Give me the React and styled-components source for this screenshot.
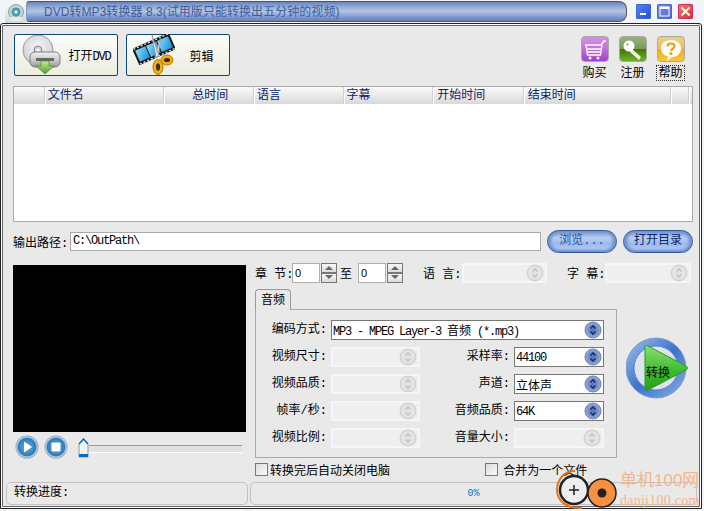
import React from 'react';
import styled, { createGlobalStyle } from 'styled-components';

const GlobalStyle = createGlobalStyle`
  html, body { margin: 0; padding: 0; background: #fff; }
  body { font-family: "Liberation Sans", "Noto Sans CJK SC", sans-serif; font-size: 12px; color: #000; }
`;

const MONO = '"Liberation Mono", "Noto Sans CJK SC", monospace';

const Window = styled.div`
  position: relative;
  width: 704px;
  height: 511px;
  overflow: hidden;
  background: #f4f5f8;
`;

const TitleRow = styled.div`
  display: flex;
  align-items: stretch;
  height: 23px;
  padding-left: 5px;
`;

const AppTab = styled.div`
  width: 21px;
  height: 20px;
  margin-top: 3px;
  background: linear-gradient(#f8f8f8, #d4d8dc);
  border-radius: 5px 3px 0 0;
  display: flex;
  align-items: center;
  justify-content: center;
`;

const TitlePill = styled.div`
  width: 601px;
  height: 21px;
  margin-top: 1px;
  padding-left: 17px;
  box-sizing: border-box;
  border: 1px solid #555;
  border-left-color: #8a9cc4;
  border-radius: 3px 8px 8px 3px;
  background: linear-gradient(#6884bc 0%, #8ea6d2 22%, #b4c5e6 48%, #7f98ca 80%, #6480b6 100%);
  color: #3c5c9e;
  font-size: 12px;
  letter-spacing: 0.05px;
  line-height: 21px;
  white-space: nowrap;
`;

const WindowButtons = styled.div`
  display: flex;
  gap: 6px;
  margin-left: 9px;
  padding-top: 4px;
`;

const WinBtn = styled.div`
  width: 15px;
  height: 15px;
  border-radius: 2px;
  background: ${p => p.$bg};
  box-shadow: inset 0 0 0 1px ${p => p.$edge};
  display: flex;
  align-items: center;
  justify-content: center;
`;

const Frame = styled.div`
  width: 702px;
  height: 486px;
  box-sizing: border-box;
  background: #e9e9e9;
  border: 1px solid #222;
  box-shadow: inset 0 0 0 2px #fff;
  outline: 1px solid #666;
  outline-offset: -3px;
  padding: 10px 4px 3px 5px;
  border-radius: 3px 3px 0 0;
`;

const Content = styled.div`
  padding-left: 7px;
  padding-right: 4px;
`;

const Toolbar = styled.div`
  display: flex;
  height: 46px;
  gap: 8px;
`;

const BigButton = styled.div`
  width: 104px;
  height: 42px;
  box-sizing: border-box;
  margin-left: 1px;
  margin-right: -1px;
  padding-left: 6px;
  display: flex;
  align-items: center;
  border: 1px solid #0c4a78;
  border-radius: 2px;
  background: linear-gradient(#fdfdfb, #ecece0);
`;

const BigLabel = styled.span`
  flex: 1;
  text-align: center;
  padding-right: 1px;
  white-space: nowrap;
  font-size: 12px;
`;

const Narrow = styled.span`
  font-family: "Liberation Mono", monospace;
  font-size: 12px;
  letter-spacing: -1.2px;
`;

const ShopGroup = styled.div`
  margin-left: auto;
  margin-right: 8px;
  display: flex;
  gap: 10px;
  padding-top: 2px;
`;

const ShopItem = styled.div`
  width: 28px;
  display: flex;
  flex-direction: column;
  align-items: center;
  gap: 4px;
`;

const ShopIcon = styled.div`
  width: 28px;
  height: 28px;
  box-sizing: border-box;
  border: 1px solid #a8a8a8;
  border-radius: 4px;
  overflow: hidden;
  background: ${p => p.$bg};
`;

const ShopLabel = styled.span`
  font-size: 12px;
  line-height: 14px;
  margin-left: -1px;
  white-space: nowrap;
  padding: 0 1px;
  outline: ${p => (p.$focus ? '1px dotted #333' : 'none')};
`;

const Table = styled.div`
  margin-top: 6px;
  height: 136px;
  box-sizing: border-box;
  border: 1px solid #a9a9a9;
  background: #fff;
`;

const TableHead = styled.div`
  display: flex;
  height: 17px;
  padding-left: 1px;
  padding-right: 2px;
  background: linear-gradient(#fafafa, #d9d9d9);
`;

const HeadCell = styled.div`
  width: ${p => p.$w}px;
  box-sizing: border-box;
  padding-left: ${p => p.$pad || 2}px;
  border-right: 1px solid #fff;
  box-shadow: inset -1px 0 0 #cfcfcf;
  color: #0a246a;
  font-size: 12px;
  line-height: 17px;
  white-space: nowrap;
`;

const PathRow = styled.div`
  margin-top: 8px;
  height: 23px;
  display: flex;
  align-items: center;
`;

const PathLabel = styled.span`
  width: 57px;
  white-space: nowrap;
  font-family: ${MONO};
`;

const PathInput = styled.div`
  width: 471px;
  height: 19px;
  box-sizing: border-box;
  border: 1px solid #a9a9a9;
  background: #fff;
  padding-left: 2px;
  font-family: "Liberation Mono", monospace;
  font-size: 12px;
  letter-spacing: -1.2px;
  line-height: 16px;
`;

const PillButton = styled.div`
  width: 70px;
  height: 23px;
  box-sizing: border-box;
  margin-left: ${p => p.$gap}px;
  border: 1px solid #35578f;
  border-radius: 12px;
  background: linear-gradient(#6f92d0 0%, #b8cef2 32%, #9dbaec 60%, #b4ccf6 100%);
  box-shadow: inset 0 -2px 2px #6f92d8, inset 3px 0 3px #6f92d0, inset -3px 0 3px #6f92d0;
  color: ${p => p.$color};
  text-align: center;
  line-height: 20px;
  white-space: nowrap;
  font-family: ${MONO};
`;

const MainArea = styled.div`
  margin-top: 9px;
  display: flex;
  gap: 9px;
`;

const LeftColumn = styled.div`
  width: 233px;
  padding-top: 3px;
`;

const Video = styled.div`
  height: 167px;
  background: #000;
`;

const Transport = styled.div`
  display: flex;
  align-items: center;
  height: 30px;
  padding-left: 2px;
  gap: 5px;
`;

const SliderWrap = styled.div`
  margin-left: 5px;
  width: 164px;
  display: flex;
  align-items: center;
  margin-top: 1px;
`;

const SliderTrack = styled.div`
  flex: 1;
  height: 8px;
  box-sizing: border-box;
  background: #e1e1e1;
  border-top: 1px solid #999;
  border-bottom: 1px solid #fff;
  margin-top: 2px;
`;

const RightColumn = styled.div`
  flex: 1;
`;

const ChapterRow = styled.div`
  height: 21px;
  display: flex;
  align-items: center;
`;

const FieldLabel = styled.span`
  white-space: nowrap;
  font-family: ${MONO};
  margin-left: ${p => p.$ml || 0}px;
  width: ${p => p.$w}px;
`;

const SpinInput = styled.div`
  width: 28px;
  height: 20px;
  box-sizing: border-box;
  border: 1px solid #b0b0b0;
  background: #fff;
  padding-left: 2px;
  font-size: 11px;
  line-height: 18px;
`;

const SpinBox = styled.div`
  width: 16px;
  height: 20px;
  margin-left: 1px;
  display: flex;
  flex-direction: column;
`;

const SpinBtn = styled.div`
  flex: 1;
  box-sizing: border-box;
  border: 1px solid #777;
  background: linear-gradient(#f6f6f6, #dcdcdc);
  display: flex;
  align-items: center;
  justify-content: center;
`;

const ComboBox = styled.div`
  width: ${p => p.$w}px;
  height: 20px;
  box-sizing: border-box;
  display: flex;
  align-items: center;
  justify-content: space-between;
  padding-right: 1px;
  ${p => (p.$off
    ? 'border: 2px solid #f6f6f6; background: #efefef;'
    : 'border: 1px solid #777; background: #fff;')}
  ${p => (p.$span ? 'grid-column: 2 / span 3;' : '')}
`;

const ComboText = styled.span`
  padding-left: 1px;
  white-space: nowrap;
  font-size: 12px;
`;

const TabRow = styled.div`
  display: flex;
  gap: 9px;
  margin-top: 6px;
`;

const TabColumn = styled.div`
  width: 362px;
`;

const Tab = styled.div`
  width: 36px;
  height: 21px;
  box-sizing: border-box;
  margin-bottom: -1px;
  position: relative;
  z-index: 1;
  border: 1px solid #999;
  border-bottom: none;
  border-radius: 4px 4px 0 0;
  background: #e9e9e9;
  text-align: center;
  line-height: 20px;
`;

const Panel = styled.div`
  height: 149px;
  box-sizing: border-box;
  border: 1px solid #a9a9a9;
  padding-top: 10px;
  display: grid;
  grid-template-columns: 71px 89px 86px 90px;
  grid-auto-rows: 20px;
  column-gap: 4px;
  row-gap: 7px;
  align-items: center;
`;

const PanelLabel = styled.span`
  text-align: right;
  white-space: nowrap;
  font-family: ${MONO};
  line-height: 17px;
  align-self: start;
  padding-top: 2px;
`;

const ConvertButton = styled.div`
  position: relative;
  width: 63px;
  height: 63px;
  margin-top: 48px;
`;

const ConvertText = styled.span`
  position: absolute;
  left: 20px;
  top: 26px;
  white-space: nowrap;
`;

const CheckRow = styled.div`
  margin-top: 4px;
  height: 14px;
  display: flex;
  align-items: center;
`;

const CheckItem = styled.div`
  display: flex;
  align-items: center;
  gap: 2px;
  width: ${p => p.$w}px;
  white-space: nowrap;
`;

const CheckMark = styled.div`
  width: 13px;
  height: 13px;
  box-sizing: border-box;
  border: 1px solid #777;
  background: linear-gradient(135deg, #dcdcdc, #fafafa);
`;

const StatusBar = styled.div`
  margin-top: 6px;
  display: flex;
  gap: 2px;
  height: 23px;
`;

const StatusCell = styled.div`
  width: ${p => p.$w}px;
  box-sizing: border-box;
  border: 1px solid #c2c2c2;
  border-radius: 5px;
  padding-left: ${p => p.$pad}px;
  line-height: 21px;
  text-align: ${p => p.$align || 'left'};
  color: ${p => p.$color || '#000'};
  font-family: ${MONO};
  font-size: ${p => p.$size || 12}px;
`;

const Watermark = styled.div`
  position: absolute;
  left: 555px;
  top: 468px;
  width: 149px;
  height: 43px;
`;

const WaterTitle = styled.span`
  position: absolute;
  left: 65px;
  top: 2px;
  color: #f6b58a;
  font-size: 17px;
  line-height: 22px;
  white-space: nowrap;
`;

const WaterUrl = styled.span`
  position: absolute;
  left: 65px;
  top: 25px;
  color: #f6b58a;
  font-family: "Liberation Serif", serif;
  font-size: 14px;
  line-height: 16px;
  letter-spacing: 0.25px;
  white-space: nowrap;
`;

function DiscTiny() {
  return (
    <svg width="18" height="18" viewBox="0 0 18 18">
      <circle cx="9" cy="8" r="7.500" fill="#c4d8d4" stroke="#8aa0a0" />
      <circle cx="9" cy="8" r="4.500" fill="#3f9fb0" />
      <circle cx="9" cy="8" r="1.700" fill="#fff" />
      <rect x="3" y="13" width="12" height="4" fill="#e8e8e8" />
    </svg>
  );
}

function DvdIcon() {
  return (
    <svg width="42" height="40" viewBox="0 0 42 40">
      <defs>
        <radialGradient id="discFill" cx="0.5" cy="0.4" r="0.7">
          <stop offset="0" stopColor="#f4f4f4" />
          <stop offset="0.6" stopColor="#dcdce0" />
          <stop offset="1" stopColor="#b8bac2" />
        </radialGradient>
        <linearGradient id="driveFill" x1="0" y1="0" x2="0" y2="1">
          <stop offset="0" stopColor="#f2f2f2" />
          <stop offset="0.6" stopColor="#c4c4c4" />
          <stop offset="1" stopColor="#969696" />
        </linearGradient>
        <linearGradient id="arrowFill" x1="0" y1="0" x2="0" y2="1">
          <stop offset="0" stopColor="#c8ec90" />
          <stop offset="1" stopColor="#4c9c30" />
        </linearGradient>
      </defs>
      <circle cx="17" cy="15" r="15" fill="url(#discFill)" stroke="#9a9aa2" />
      <circle cx="17" cy="15" r="4" fill="#cfcfd6" stroke="#8a8a92" />
      <circle cx="17" cy="15" r="1.600" fill="#fff" />
      <rect x="9" y="17" width="30" height="15" rx="5" fill="url(#driveFill)" stroke="#808080" />
      <rect x="15" y="23" width="18" height="3" fill="#666" />
      <path d="M20 26h8v5h5l-9 8-9-8h5z" fill="url(#arrowFill)" stroke="#4a8a30" strokeWidth="0.7" />
    </svg>
  );
}

function FilmIcon() {
  return (
    <svg width="42" height="42" viewBox="0 0 42 42">
      <defs>
        <linearGradient id="filmFill" x1="0" y1="0" x2="1" y2="1">
          <stop offset="0" stopColor="#8fe0fa" />
          <stop offset="1" stopColor="#0f8ed8" />
        </linearGradient>
      </defs>
      <g transform="rotate(-24 21 15)">
        <rect x="1" y="6" width="40" height="18" fill="#161616" />
        <rect x="3" y="9" width="11" height="12" fill="url(#filmFill)" />
        <rect x="15" y="9" width="11" height="12" fill="url(#filmFill)" />
        <rect x="27" y="9" width="12" height="12" fill="url(#filmFill)" />
        <path d="M2 7h2M6 7h2M10 7h2M14 7h2M18 7h2M22 7h2M26 7h2M30 7h2M34 7h2M38 7h2M2 23h2M6 23h2M10 23h2M14 23h2M18 23h2M22 23h2M26 23h2M30 23h2M34 23h2M38 23h2" stroke="#eee" strokeWidth="1.200" />
      </g>
      <path d="M19 1l7 21-3 2zM28 2l-3 21-3-1z" fill="#eeeef2" stroke="#8a8a92" strokeWidth="0.6" />
      <ellipse cx="25" cy="33" rx="5" ry="7.500" fill="#f0b010" stroke="#b87800" />
      <ellipse cx="25" cy="33" rx="2" ry="3.800" fill="#3a2a10" />
      <ellipse cx="34" cy="26" rx="6" ry="5" fill="#f0b010" stroke="#b87800" />
      <ellipse cx="34" cy="26" rx="3.200" ry="2" fill="#3a2a10" />
    </svg>
  );
}

function CartIcon() {
  return (
    <svg width="26" height="26" viewBox="0 0 26 26" fill="none">
      <path d="M3 8h16l3-4h2" stroke="#fff" strokeWidth="1.500" />
      <path d="M4 8l1.500 10h13L20 8M5 12h14M5.500 15h13" stroke="#fff" strokeWidth="1.300" />
      <circle cx="8" cy="21" r="1.500" fill="#fff" />
      <circle cx="16" cy="21" r="1.500" fill="#fff" />
    </svg>
  );
}

function KeyIcon() {
  return (
    <svg width="26" height="26" viewBox="0 0 26 26">
      <circle cx="9" cy="9" r="5.500" fill="#fff" />
      <path d="M12 12l9 8-2 3-9-8z" fill="#f4f4ec" />
      <circle cx="7.500" cy="7.500" r="1.200" fill="#9ab87a" />
    </svg>
  );
}

function HelpIcon() {
  return (
    <svg width="26" height="26" viewBox="0 0 26 26">
      <path d="M13 3c6 0 10 3.500 10 8.500S19 20 14 20l-5 4 1-4.500C6 18.500 3 15.500 3 11.500 3 6.500 7 3 13 3z" fill="#fff" />
      <path d="M9.500 9.500c0-2 1.500-3 3.500-3s3.500 1 3.500 2.800c0 2.400-3.400 2.400-3.400 4.700" fill="none" stroke="#e8a010" strokeWidth="2.200" />
      <circle cx="13" cy="16.500" r="1.500" fill="#e8a010" />
    </svg>
  );
}

function ComboArrow({ off }) {
  const id = off ? 'comboOff' : 'comboOn';
  return (
    <svg width="18" height="18" viewBox="0 0 18 18">
      <defs>
        <radialGradient id={id} cx="0.5" cy="0.5" r="0.55">
          <stop offset="0" stopColor={off ? '#e2e2e2' : '#5a74b4'} />
          <stop offset="0.6" stopColor={off ? '#e6e6e6' : '#7a94cc'} />
          <stop offset="1" stopColor={off ? '#d4d4d4' : '#a8bce0'} />
        </radialGradient>
      </defs>
      <circle cx="9" cy="9" r="8" fill={`url(#${id})`} stroke={off ? '#d0d0d0' : '#6a7fae'} />
      <path d="M6.500 7.500L9 5l2.500 2.500M6.500 10.500L9 13l2.500-2.500" fill="none" stroke={off ? '#c4c4c4' : '#1f2f70'} strokeWidth="1.700" />
    </svg>
  );
}

function Combo({ w, off, text, span }) {
  return (
    <ComboBox $w={w} $off={off} $span={span}>
      <ComboText>{text}</ComboText>
      <ComboArrow off={off} />
    </ComboBox>
  );
}

function Spinner() {
  return (
    <>
      <SpinInput>0</SpinInput>
      <SpinBox>
        <SpinBtn>
          <svg width="8" height="5" viewBox="0 0 8 5"><path d="M0 5l4-4 4 4z" fill="#666" /></svg>
        </SpinBtn>
        <SpinBtn>
          <svg width="8" height="5" viewBox="0 0 8 5"><path d="M0 0l4 4 4-4z" fill="#666" /></svg>
        </SpinBtn>
      </SpinBox>
    </>
  );
}

function RoundBtn({ children, id }) {
  return (
    <svg width="24" height="24" viewBox="0 0 24 24">
      <defs>
        <radialGradient id={id} cx="0.5" cy="0.5" r="0.55">
          <stop offset="0" stopColor="#6ab0e0" />
          <stop offset="0.7" stopColor="#2f7cb8" />
          <stop offset="0.78" stopColor="#b8cde4" />
          <stop offset="1" stopColor="#6a8ab4" />
        </radialGradient>
      </defs>
      <circle cx="12" cy="12" r="11.500" fill={`url(#${id})`} />
      {children}
    </svg>
  );
}

function ConvertIcon() {
  return (
    <svg width="63" height="63" viewBox="0 0 63 63">
      <defs>
        <linearGradient id="ringFill" x1="0" y1="0" x2="1" y2="1">
          <stop offset="0" stopColor="#a4c0ec" />
          <stop offset="0.5" stopColor="#3c74d0" />
          <stop offset="1" stopColor="#8aaee4" />
        </linearGradient>
        <linearGradient id="playFill" x1="0" y1="0" x2="0" y2="1">
          <stop offset="0" stopColor="#8ce070" />
          <stop offset="0.6" stopColor="#3ab82c" />
          <stop offset="1" stopColor="#2c9c20" />
        </linearGradient>
      </defs>
      <circle cx="30" cy="31" r="30" fill="url(#ringFill)" stroke="#7f9cd0" />
      <circle cx="30" cy="31" r="22" fill="#dfe2ec" stroke="#5c86d0" />
      <path d="M19 11c-1-2 1-3 3-2l38 20c2 1 2 3 0 4L22 53c-2 1-4 0-3-2z" fill="url(#playFill)" stroke="#2a9c20" />
    </svg>
  );
}

const HEADERS = [
  { w: 31, text: '' },
  { w: 120, text: '文件名' },
  { w: 90, text: '总时间', pad: 27 },
  { w: 90, text: '语言' },
  { w: 90, text: '字幕' },
  { w: 91, text: '开始时间', pad: 3 },
  { w: 148, text: '结束时间', pad: 3 },
  { w: 18, text: '' },
];

const FORM_ROWS = [
  { left: '视频尺寸:', right: '采样率:', value: <Narrow>44100</Narrow> },
  { left: '视频品质:', right: '声道:', value: '立体声' },
  { left: '帧率/秒:', right: '音频品质:', value: <Narrow>64K</Narrow> },
  { left: '视频比例:', right: '音量大小:', off: true },
];

export default function App() {
  return (
    <Window>
      <GlobalStyle />
      <TitleRow>
        <AppTab><DiscTiny /></AppTab>
        <TitlePill>DVD转MP3转换器 8.3(试用版只能转换出五分钟的视频)</TitlePill>
        <WindowButtons>
          <WinBtn $bg="linear-gradient(135deg,#5c88f0,#1f4ed8)" $edge="#3a66d8">
            <svg width="9" height="9" viewBox="0 0 9 9"><rect x="1" y="6" width="6" height="2" fill="#fff" /></svg>
          </WinBtn>
          <WinBtn $bg="linear-gradient(135deg,#7a94ec,#4a64d8)" $edge="#4a64d0">
            <svg width="11" height="11" viewBox="0 0 11 11"><rect x="1" y="1" width="9" height="9" fill="none" stroke="#fff" /><rect x="1" y="1" width="9" height="2" fill="#fff" /></svg>
          </WinBtn>
          <WinBtn $bg="linear-gradient(135deg,#f08050,#d03818)" $edge="#e02080">
            <svg width="11" height="11" viewBox="0 0 11 11"><path d="M1.500 1.500l8 8M9.500 1.500l-8 8" stroke="#fff" strokeWidth="2" /></svg>
          </WinBtn>
        </WindowButtons>
      </TitleRow>
      <Frame>
        <Content>
          <Toolbar>
            <BigButton><DvdIcon /><BigLabel>打开<Narrow>DVD</Narrow></BigLabel></BigButton>
            <BigButton><FilmIcon /><BigLabel>剪辑</BigLabel></BigButton>
            <ShopGroup>
              <ShopItem>
                <ShopIcon $bg="linear-gradient(#d88ee8 0%, #c070dc 50%, #a040c4 100%)"><CartIcon /></ShopIcon>
                <ShopLabel>购买</ShopLabel>
              </ShopItem>
              <ShopItem>
                <ShopIcon $bg="linear-gradient(#96b478 0%, #7a9a5c 48%, #3c7a00 52%, #70b030 100%)"><KeyIcon /></ShopIcon>
                <ShopLabel>注册</ShopLabel>
              </ShopItem>
              <ShopItem>
                <ShopIcon $bg="linear-gradient(#eed080 0%, #e8c060 48%, #f0b010 52%, #f8c838 100%)"><HelpIcon /></ShopIcon>
                <ShopLabel $focus>帮助</ShopLabel>
              </ShopItem>
            </ShopGroup>
          </Toolbar>

          <Table>
            <TableHead>
              {HEADERS.map((h, i) => (
                <HeadCell key={i} $w={h.w} $pad={h.pad}>{h.text}</HeadCell>
              ))}
            </TableHead>
          </Table>

          <PathRow>
            <PathLabel>输出路径:</PathLabel>
            <PathInput>C:\OutPath\</PathInput>
            <PillButton $gap={6} $color="#2f4f97">浏览...</PillButton>
            <PillButton $gap={6} $color="#0a246a">打开目录</PillButton>
          </PathRow>

          <MainArea>
            <LeftColumn>
              <Video />
              <Transport>
                <RoundBtn id="playBtn"><path d="M9 6.500l8 5.500-8 5.500z" fill="#fff" /></RoundBtn>
                <RoundBtn id="stopBtn"><rect x="7.500" y="7.500" width="9" height="9" rx="1" fill="#fff" /></RoundBtn>
                <SliderWrap>
                  <svg width="11" height="20" viewBox="0 0 11 20">
                    <path d="M1 6l4.500-5L10 6v13H1z" fill="#f2f2f2" stroke="#999" />
                    <path d="M1 6l4.500-5L10 6" fill="none" stroke="#0a6ac8" strokeWidth="1.500" />
                    <rect x="1" y="16" width="9" height="3" fill="#0a6ac8" />
                  </svg>
                  <SliderTrack />
                </SliderWrap>
              </Transport>
            </LeftColumn>

            <RightColumn>
              <ChapterRow>
                <FieldLabel $w={37}>章 节:</FieldLabel>
                <Spinner />
                <FieldLabel $ml={3} $w={18}>至</FieldLabel>
                <Spinner />
                <FieldLabel $ml={20} $w={39}>语 言:</FieldLabel>
                <Combo w={85} off />
                <FieldLabel $ml={20} $w={38}>字 幕:</FieldLabel>
                <Combo w={86} off />
              </ChapterRow>

              <TabRow>
                <TabColumn>
                  <Tab>音频</Tab>
                  <Panel>
                    <PanelLabel>编码方式:</PanelLabel>
                    <Combo w={273} span text={<><Narrow>MP3 - MPEG Layer-3 </Narrow>音频<Narrow> (*.mp3)</Narrow></>} />
                    {FORM_ROWS.map(r => (
                      <React.Fragment key={r.left}>
                        <PanelLabel>{r.left}</PanelLabel>
                        <Combo w={89} off />
                        <PanelLabel>{r.right}</PanelLabel>
                        <Combo w={90} off={r.off} text={r.value} />
                      </React.Fragment>
                    ))}
                  </Panel>
                  <CheckRow>
                    <CheckItem $w={230}><CheckMark />转换完后自动关闭电脑</CheckItem>
                    <CheckItem $w={120}><CheckMark />&nbsp;合并为一个文件</CheckItem>
                  </CheckRow>
                </TabColumn>
                <ConvertButton>
                  <ConvertIcon />
                  <ConvertText>转换</ConvertText>
                </ConvertButton>
              </TabRow>
            </RightColumn>
          </MainArea>
        </Content>

        <StatusBar>
          <StatusCell $w={242} $pad={7}>转换进度:</StatusCell>
          <StatusCell $w={447} $pad={0} $align="center" $color="#0a70d0" $size={10}>0%</StatusCell>
        </StatusBar>
      </Frame>

      <Watermark>
        <svg width="68" height="43" viewBox="0 0 68 43">
          <circle cx="19" cy="22" r="14" fill="#eeeeee" stroke="#222" strokeWidth="2.500" />
          <path d="M14 22h10M19 17v10" stroke="#222" strokeWidth="1.500" />
          <path d="M20 3C8 3 2 13 2 22c0 10 9 19 25 18" fill="none" stroke="#f07010" strokeWidth="2" />
          <circle cx="47" cy="25" r="14" fill="#f89040" stroke="#222" strokeWidth="1.500" />
          <circle cx="47" cy="25" r="4.500" fill="#222" />
        </svg>
        <WaterTitle>单机100网</WaterTitle>
        <WaterUrl>danji100.com</WaterUrl>
      </Watermark>
    </Window>
  );
}
